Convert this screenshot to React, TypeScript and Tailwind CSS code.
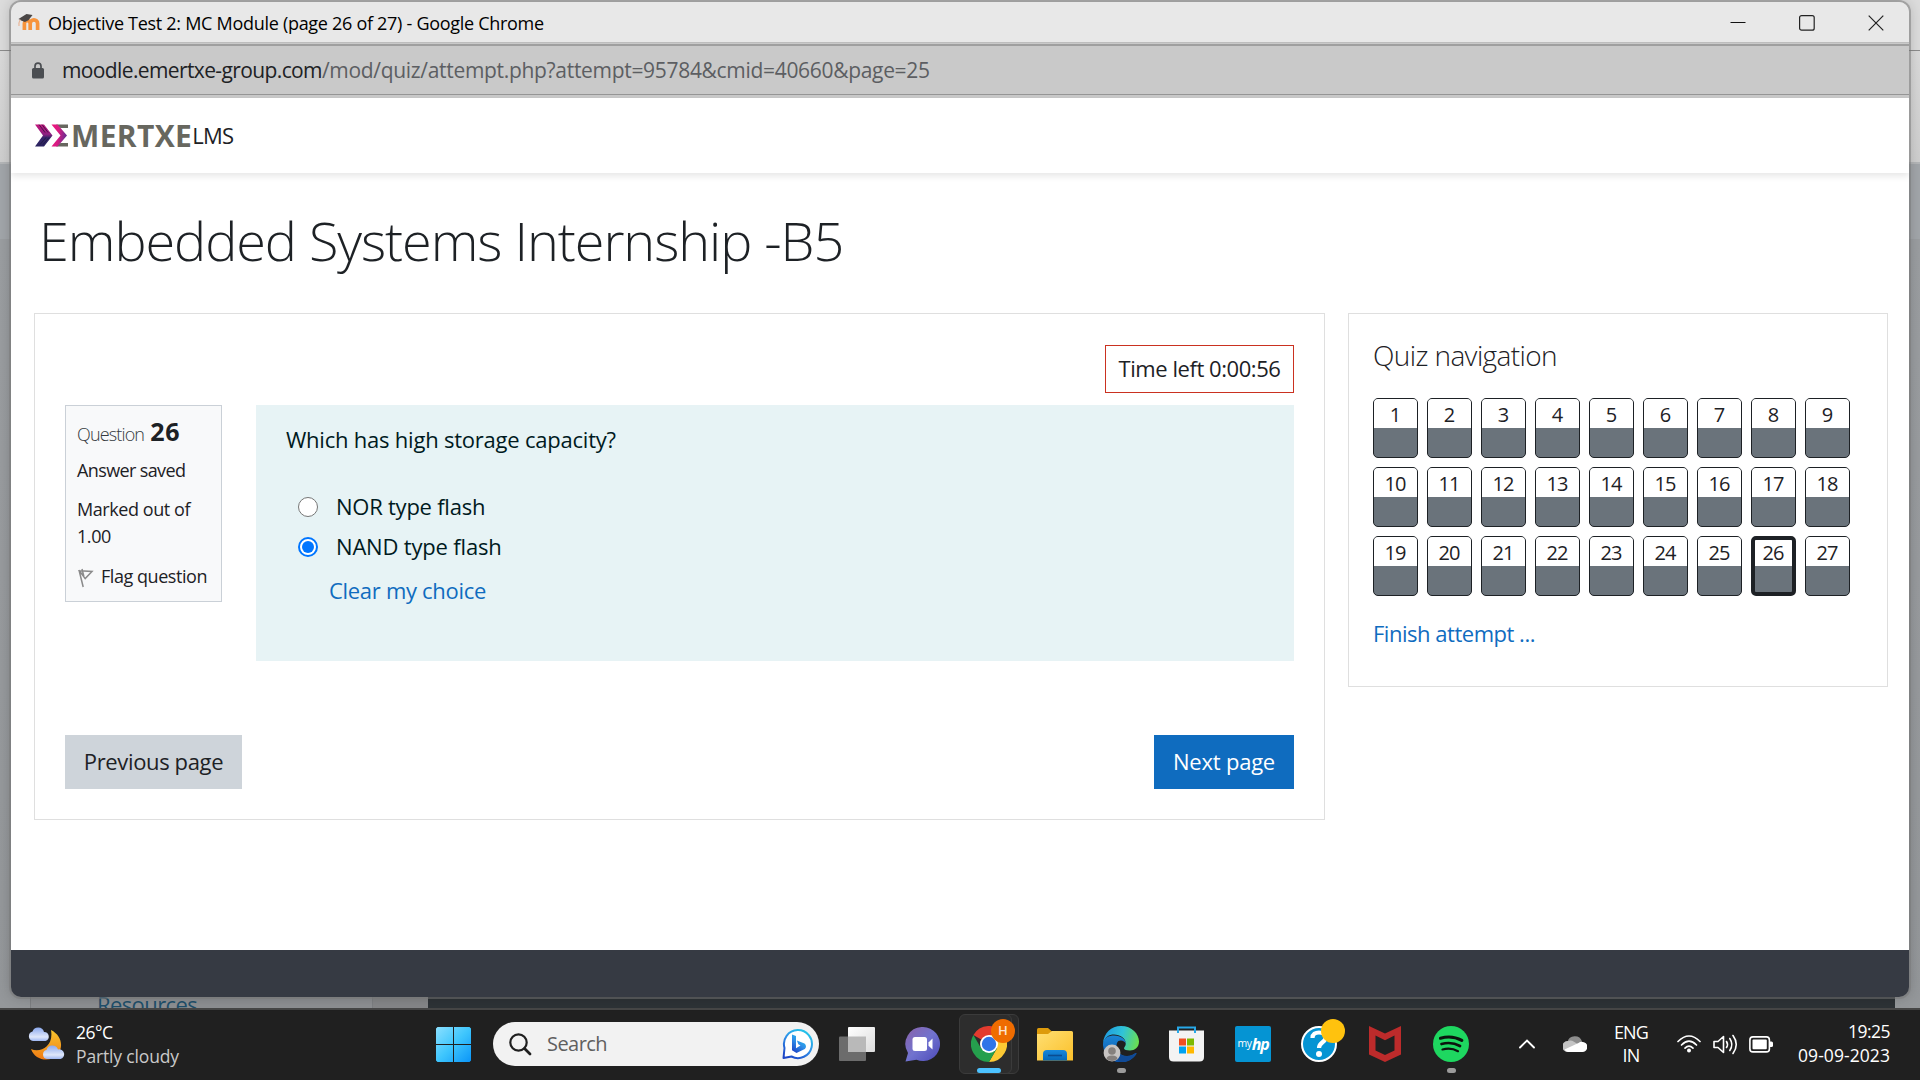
import React from "react";

const questions = Array.from({ length: 27 }, (_, i) => i + 1);
const CURRENT = 26;

function MoodleIcon() {
  return (
    <svg width="24" height="20" viewBox="0 0 24 20" className="mt-[1px]">
      <path d="M7.2 17V10.5a2.9 2.9 0 0 1 5.8 0V17M13 17V10.5a2.9 2.9 0 0 1 7.4 0V17" transform="translate(.2 0)" fill="none" stroke="#f7943c" strokeWidth="3.7" />
      <path d="M1.500 6 9.500 1 15.500 2l-4 5.300-3.600 1.600L4.200 7.600z" fill="#4a4646" />
      <path d="M3.200 6.500Q1.600 9.500 2 13" stroke="#e9b79a" strokeWidth="1.2" fill="none" />
    </svg>
  );
}

function LockIcon() {
  return (
    <svg width="14" height="17" viewBox="0 0 14 17">
      <rect x="1" y="6" width="12" height="10.5" rx="1.5" fill="#4b4e52" />
      <path d="M4 7V4.200a3 3 0 0 1 6 0V7" fill="none" stroke="#4b4e52" strokeWidth="1.7" />
    </svg>
  );
}

function Logo() {
  return (
    <div className="flex h-[24px] items-center">
      <svg width="35" height="23" viewBox="0 0 35 23">
        <defs>
          <linearGradient id="chev" x1="0" y1="0" x2="0" y2="1">
            <stop offset="0" stopColor="#c4157c" />
            <stop offset=".45" stopColor="#8c2180" />
            <stop offset=".6" stopColor="#35276b" />
            <stop offset="1" stopColor="#2a235f" />
          </linearGradient>
          <linearGradient id="chev2" x1="0" y1="0" x2="1" y2=".2">
            <stop offset="0" stopColor="#f0147c" />
            <stop offset=".5" stopColor="#d81c82" />
            <stop offset="1" stopColor="#6b2d91" />
          </linearGradient>
        </defs>
        <path d="M0 .5H9L17.500 11.500 9 22.500H0L8 11.500z" fill="url(#chev)" />
        <path d="M4 .5l6 8M7 .5l6 8M5 20.500l6-7M8 20.500l6-7" stroke="#1d1538" strokeWidth=".7" />
        <path d="M21 .5H33V4H25.500zM21 22.500H33V19H25.500z" fill="#67675f" />
        <path d="M16.500 .5h6L32 11.500 22.500 22.500h-6L25.500 11.500z" fill="url(#chev2)" />
      </svg>
      <span className="ml-[1px] text-[30px] leading-[22px] font-bold tracking-[0.350px] text-[#67675f]">MERTXE</span>
      <span className="pb-[1px] text-[22px] leading-[24px] tracking-[-0.700px] text-[#1d2125]">LMS</span>
    </div>
  );
}

function TitleBar() {
  return (
    <div className="flex h-[41px] shrink-0 items-center border-b border-[#bdbdbd] bg-[#e8e8e8] pl-[6px]">
      <MoodleIcon />
      <span className="ml-[7px] pt-[2px] text-[18px] tracking-[-0.29px] text-black">
        Objective Test 2: MC Module (page 26 of 27) - Google Chrome
      </span>
      <div className="mr-[25px] ml-auto flex items-center gap-[53px] pt-[1px]">
        <svg width="16" height="16" viewBox="0 0 16 16"><path d="M.5 7.500h15" stroke="#111" /></svg>
        <svg width="16" height="16" viewBox="0 0 16 16"><rect x=".6" y=".6" width="14.600" height="14.600" rx="2" fill="none" stroke="#222" strokeWidth="1.2" /></svg>
        <svg width="16" height="16" viewBox="0 0 16 16"><path d="M.7.7l14.600 14.600M15.300.7.7 15.300" stroke="#222" strokeWidth="1.2" /></svg>
      </div>
    </div>
  );
}

function UrlBar() {
  return (
    <div className="flex h-[55px] shrink-0 flex-col bg-[#c9c9c9] pt-[1px]">
      <div className="flex h-[51px] items-center border-t-2 border-b border-t-[#9f9f9f] border-b-[#959595] pl-[20px]">
        <LockIcon />
        <span className="ml-[17px] text-[21px] leading-[28px] tracking-[-0.620px] text-[#202124]">moodle.emertxe-group.com</span>
        <span className="text-[21px] leading-[28px] tracking-[-0.310px] text-[#5c5e62]">
          /mod/quiz/attempt.php?attempt=95784&amp;cmid=40660&amp;page=25
        </span>
      </div>
    </div>
  );
}

function Radio({ checked }: { checked?: boolean }) {
  return checked ? (
    <span className="mt-[1px] flex size-[20px] items-center justify-center rounded-full border-2 border-[#0075ff] bg-white">
      <span className="size-[12px] rounded-full bg-[#0075ff]" />
    </span>
  ) : (
    <span className="mt-[1px] size-[20px] rounded-full border-[1.500px] border-[#767676] bg-white" />
  );
}

function QuestionInfo() {
  return (
    <div className="flex h-[197px] w-[157px] flex-col border border-[#cad0d7] bg-[#f8f9fa] pl-[11px] text-[18px] whitespace-nowrap text-[#1d2125]">
      <div className="mt-[11px] flex h-[28px] items-baseline leading-[28px]">
        <span className="text-[18px] font-light tracking-[-0.850px] text-[#343a40]">Question</span>
        <span className="ml-[6px] text-[25px] font-bold tracking-[0.800px]">26</span>
      </div>
      <div className="mt-[12px] leading-[27px] tracking-[-0.620px]">Answer saved</div>
      <div className="mt-[12px] leading-[27px] tracking-[-0.430px]">
        Marked out of
        <br />
        1.00
      </div>
      <div className="mt-[13px] flex items-center leading-[27px] tracking-[-0.450px]">
        <svg width="17" height="20" viewBox="0 0 17 20" className="mt-[2px] mr-[7px]">
          <path d="M2 2l4.200 17M2.400 2.800 15 3.400 8.200 10.600zM5 1l2 8" fill="none" stroke="#8a8a8a" strokeWidth="1.5" />
        </svg>
        Flag question
      </div>
    </div>
  );
}

function QuestionBody() {
  return (
    <div className="h-[256px] w-[1038px] bg-[#e7f3f5] pt-[17px] pl-[30px] text-[22px] leading-[34px] text-[#001a1e]">
      <div className="tracking-[-0.220px]">Which has high storage capacity?</div>
      <div className="mt-[33px] flex h-[34px] items-center pl-[12px]">
        <Radio />
        <span className="ml-[18px] tracking-[-0.240px]">NOR type flash</span>
      </div>
      <div className="mt-[6px] flex h-[34px] items-center pl-[12px]">
        <Radio checked />
        <span className="ml-[18px] tracking-[-0.180px]">NAND type flash</span>
      </div>
      <div className="mt-[10px] pl-[43px] tracking-[-0.300px] text-[#0f6cbf]">Clear my choice</div>
    </div>
  );
}

function NavButton({ n }: { n: number }) {
  const current = n === CURRENT;
  return (
    <div
      className={
        current
          ? "flex h-[60px] flex-col overflow-hidden rounded-[5px] border-4 border-[#1d2125] bg-[#6a737b]"
          : "flex h-[60px] flex-col overflow-hidden rounded-[5px] border border-[#1d2125] bg-[#6a737b]"
      }
    >
      <div
        className={
          current
            ? "flex h-[26px] items-center justify-center bg-white pr-[1px] pb-[1px] text-[20px] leading-none tracking-[-0.900px]"
            : "flex h-[29px] items-center justify-center bg-white pt-[2px] pr-[1px] text-[20px] leading-none tracking-[-0.900px]"
        }
      >
        {n}
      </div>
    </div>
  );
}

function QuizPage() {
  return (
    <>
      <header className="relative flex h-[75px] shrink-0 items-center bg-white pl-[24px] shadow-[0_3px_7px_rgba(0,0,0,0.1)]">
        <Logo />
      </header>
      <main className="flex flex-1 flex-col bg-white text-[#1d2125]">
        <h1 className="mt-[33px] ml-[28px] h-[68px] text-[54px] leading-[68px] font-light tracking-[-1.060px]">
          Embedded Systems Internship -B5
        </h1>
        <div className="mt-[39px] flex items-start gap-[23px] pl-[23px]">
          <section className="flex h-[507px] w-[1291px] flex-col border border-[#dfdfdf] px-[30px]">
            <div className="mt-[31px] flex h-[48px] w-[189px] items-center justify-center self-end border border-[#ca3120] pb-[2px] text-[22px] tracking-[-0.440px]">
              Time left 0:00:56
            </div>
            <div className="mt-[12px] flex items-start justify-between">
              <QuestionInfo />
              <QuestionBody />
            </div>
            <div className="mt-[74px] flex justify-between text-[22px]">
              <button className="h-[54px] w-[177px] bg-[#ced4da] pb-[2px] tracking-[-0.360px]">Previous page</button>
              <button className="h-[54px] w-[140px] bg-[#0f6cbf] pb-[2px] tracking-[-0.220px] text-white">Next page</button>
            </div>
          </section>
          <aside className="flex h-[374px] w-[540px] flex-col border border-[#dfdfdf] pl-[24px]">
            <h2 className="mt-[24px] text-[28px] leading-[34px] font-light tracking-[-0.600px]">Quiz navigation</h2>
            <div className="mt-[26px] grid grid-cols-[repeat(9,45px)] gap-[9px]">
              {questions.map((n) => (
                <NavButton key={n} n={n} />
              ))}
            </div>
            <a className="mt-[20px] text-[22px] leading-[34px] tracking-[-0.480px] text-[#0f6cbf]">Finish attempt ...</a>
          </aside>
        </div>
      </main>
      <footer className="h-[47px] shrink-0 bg-[#363a43]" />
    </>
  );
}

function WeatherIcon() {
  return (
    <svg width="37" height="34" viewBox="0 0 37 34">
      <defs>
        <linearGradient id="moon" x1="0" y1="0" x2="0" y2="1">
          <stop offset="0" stopColor="#f7c52d" />
          <stop offset="1" stopColor="#f07a13" />
        </linearGradient>
        <linearGradient id="cloud" x1="0" y1="0" x2="0" y2="1">
          <stop offset="0" stopColor="#8ba9ee" />
          <stop offset=".7" stopColor="#dfe7fa" />
          <stop offset="1" stopColor="#9db6f2" />
        </linearGradient>
      </defs>
      <path d="M23 3C33 8 36 19 30 27 23 36 7 34 3 22 12 26 26 20 23 3z" fill="url(#moon)" />
      <path d="M5 14a4.800 4.800 0 0 1-.5-9.400A6 6 0 0 1 16 5a4.600 4.600 0 0 1 1.500 9z" fill="url(#cloud)" />
      <path d="M19 32a4.600 4.600 0 0 1-.5-9A6 6 0 0 1 30 22.500a4.800 4.800 0 0 1 2.500 9.500z" fill="url(#cloud)" />
    </svg>
  );
}

function StartIcon() {
  return (
    <svg width="35" height="35" viewBox="0 0 35 35">
      <defs>
        <linearGradient id="win" x1="0" y1="0" x2="1" y2="1">
          <stop offset="0" stopColor="#8be0ff" />
          <stop offset=".5" stopColor="#3fc6fd" />
          <stop offset="1" stopColor="#0a95f8" />
        </linearGradient>
      </defs>
      <path d="M1.500 0H17V17H0V1.500zM18 0H33.500L35 1.500V17H18zM0 18H17V35H1.500L0 33.500zM18 18H35V33.500L33.500 35H18z" fill="url(#win)" />
    </svg>
  );
}

function BingIcon() {
  return (
    <svg width="31" height="32" viewBox="0 0 31 32">
      <defs>
        <linearGradient id="bing" x1=".8" y1="0" x2=".2" y2="1">
          <stop offset="0" stopColor="#23c8ea" />
          <stop offset=".5" stopColor="#2f8fe8" />
          <stop offset="1" stopColor="#1c45c6" />
        </linearGradient>
      </defs>
      <path d="M1.500 30 2.500 20A14 14 0 1 1 9.500 28.500z" fill="#fff" stroke="url(#bing)" strokeWidth="2" strokeLinejoin="round" />
      <path d="M10 6.500l4 1.600v12.200l4.500-2.800-2.200-1.200-1.400-3.900 7.600 3a3.600 3.600 0 0 1 .3 5.600L14.500 25 10 22.300z" fill="url(#bing)" />
    </svg>
  );
}

function TaskViewIcon() {
  return (
    <svg width="36" height="34" viewBox="0 0 36 34">
      <defs>
        <linearGradient id="tv" x1="0" y1="0" x2="1" y2="1">
          <stop offset="0" stopColor="#fff" />
          <stop offset="1" stopColor="#dcdcdc" />
        </linearGradient>
      </defs>
      <rect x="0" y="9.500" width="27" height="24.500" rx="1" fill="#6c6c6c" />
      <rect x="9" y="0" width="27" height="25" rx="1" fill="url(#tv)" />
      <rect x="9" y="9.500" width="18" height="15.500" fill="#b9b9b9" />
    </svg>
  );
}

function ChatIcon() {
  return (
    <svg width="35" height="35" viewBox="0 0 35 35" className="mr-[2px]">
      <defs>
        <linearGradient id="chat" x1="0" y1="0" x2="1" y2="1">
          <stop offset="0" stopColor="#8a62a8" />
          <stop offset=".5" stopColor="#7173cf" />
          <stop offset="1" stopColor="#4b48b8" />
        </linearGradient>
      </defs>
      <path d="M18 0a17 17 0 1 1-6.500 32.700L.5 34.500 3 26A17 17 0 0 1 18 0z" fill="url(#chat)" />
      <rect x="7.500" y="10" width="14.500" height="14" rx="2.500" fill="#fff" />
      <path d="M23.500 15.500 27.500 11.500v11L23.500 18.800z" fill="#fff" />
    </svg>
  );
}

function ChromeIcon() {
  return (
    <svg width="36" height="36" viewBox="0 0 48 48">
      <path d="M24 24 3.200 12A24 24 0 0 1 44.800 12z" fill="#e33b2e" />
      <path d="M24 12H44.800A24 24 0 0 1 24 48L34.400 30z" fill="#fcc934" />
      <path d="M13.600 30 3.200 12A24 24 0 0 0 24 48L34.400 30 24 34z" fill="#259f4d" />
      <circle cx="24" cy="24" r="12" fill="#fff" />
      <circle cx="24" cy="24" r="9.600" fill="#2f74e8" />
    </svg>
  );
}

function ExplorerIcon() {
  return (
    <svg width="36" height="33" viewBox="0 0 36 33">
      <defs>
        <linearGradient id="fold" x1="0" y1="0" x2="1" y2="1">
          <stop offset="0" stopColor="#ffdf73" />
          <stop offset="1" stopColor="#fbc02a" />
        </linearGradient>
        <linearGradient id="foldb" x1="0" y1="0" x2="0" y2="1">
          <stop offset="0" stopColor="#1687dc" />
          <stop offset="1" stopColor="#0668b8" />
        </linearGradient>
      </defs>
      <path d="M0 1.500Q0 0 1.500 0H11L15.500 4V8H0z" fill="#dd9b0c" />
      <path d="M0 6H11L15 3H34.500Q36 3 36 4.500V32.500H0z" fill="url(#fold)" />
      <path d="M6 32.500V26Q6 22 10 22H26Q30 22 30 26V32.500z" fill="url(#foldb)" />
      <path d="M11 27.500H25" stroke="#0a4c91" strokeWidth="1.600" />
    </svg>
  );
}

function EdgeIcon() {
  return (
    <svg width="36" height="36" viewBox="0 0 36 36">
      <defs>
        <linearGradient id="edgeTop" x1="0" y1=".4" x2="1" y2=".6">
          <stop offset="0" stopColor="#1e9be0" />
          <stop offset=".5" stopColor="#30c3d8" />
          <stop offset="1" stopColor="#6be04f" />
        </linearGradient>
        <linearGradient id="edgeLow" x1="0" y1="0" x2="0" y2="1">
          <stop offset="0" stopColor="#1a86d6" />
          <stop offset="1" stopColor="#0c4fa3" />
        </linearGradient>
      </defs>
      <path d="M0 18C0 12 6 9.500 11 9.500c7 0 12 4 12 8.500-1-4-8-5-9-1-2 6 2 13 10 13 4 0 7-2 8.500-3 .7-.4 1.200.3.800 1A18 18 0 0 1 0 18z" fill="url(#edgeLow)" />
      <path d="M24 30c4 0 7-2 8.500-3 .7-.4 1.200.3.800 1A18 18 0 0 1 17 36c-4-3-6-8-4.500-14C14 27 18 30 24 30z" fill="#104a96" />
      <path d="M0 17C1 7 8 0 18 0c11 0 18 8 18 15.500 0 6-4.500 9-9 9-3.500 0-6-1-6-2.300 0-1 1.800-1.700 1.800-4.700C22.800 12 17 8.500 11 8.500 6 8.500 2 11 0 17z" fill="url(#edgeTop)" />
      <circle cx="9" cy="27" r="8.400" fill="#c7c4c2" />
      <circle cx="9" cy="25" r="3.800" fill="#85807d" />
      <path d="M3.500 33Q3.500 29.500 9 29.500T14.500 33Q12 35 9 35T3.500 33z" fill="#85807d" />
    </svg>
  );
}

function StoreIcon() {
  return (
    <svg width="35" height="36" viewBox="0 0 35 36" className="mr-[2px]">
      <path d="M0 4.500H35V31Q35 35.500 30.500 35.500H4.500Q0 35.500 0 31z" fill="#f3f3f3" />
      <path d="M9 7V1.500H26V7" fill="none" stroke="#27a8e8" strokeWidth="2" />
      <path d="M10 12.500h7v7h-7z" fill="#f04e23" />
      <path d="M18 12.500h7v7h-7z" fill="#7eb900" />
      <path d="M10 20.500h7v7h-7z" fill="#00a2f0" />
      <path d="M18 20.500h7v7h-7z" fill="#ffb800" />
    </svg>
  );
}

function MyHpIcon() {
  return (
    <div className="flex size-[36px] items-center justify-center rounded-[2px] bg-[#0594d3] pb-[1px] text-white">
      <span className="text-[10.500px] leading-none tracking-[-0.300px]">my</span>
      <span className="text-[16px] leading-none font-bold tracking-[-1.200px] italic">hp</span>
    </div>
  );
}

function HelpIcon() {
  return (
    <div className="relative flex size-[36px] items-center justify-center rounded-full border-2 border-white bg-[#0594d3]">
      <svg width="20" height="28" viewBox="0 0 20 28">
        <path d="M3.500 8C3.500 4 6.500 2.500 10 2.500s6.500 2 6.500 5.200C16.500 12.500 10 12 10 18" fill="none" stroke="#fff" strokeWidth="4.200" />
        <circle cx="10" cy="24" r="3" fill="#fff" />
      </svg>
      <span className="absolute top-[-9px] left-[18px] size-[24px] rounded-full bg-[#ffc20e]" />
    </div>
  );
}

function McAfeeIcon() {
  return (
    <svg width="32" height="36" viewBox="0 0 32 36">
      <path d="M0 0 16 7.500 32 0V28.500L16 36 0 28.500z" fill="#bd2b2b" />
      <path d="M6.500 9.500 16 14.200 25.500 9.500V24.500L16 29 6.500 24.500z" fill="#202020" />
    </svg>
  );
}

function SpotifyIcon() {
  return (
    <svg width="36" height="36" viewBox="0 0 36 36">
      <circle cx="18" cy="18" r="18" fill="#1ed760" />
      <g fill="none" stroke="#0c130e" strokeLinecap="round">
        <path d="M7.500 12.200Q19 9 28.800 14.300" strokeWidth="3.200" />
        <path d="M8.500 18Q18.500 15.300 27 20" strokeWidth="2.700" />
        <path d="M9.500 23.500Q18 21.300 25 25.200" strokeWidth="2.200" />
      </g>
    </svg>
  );
}

function Cell({ children, dot }: { children: React.ReactNode; dot?: boolean }) {
  return (
    <div className="relative flex h-full w-[66px] shrink-0 items-center justify-center pb-[2px]">
      {children}
      {dot && <span className="absolute bottom-[7px] left-[29px] h-[5px] w-[9px] rounded-full bg-[#9b9b9b]" />}
    </div>
  );
}

function Taskbar() {
  return (
    <div className="flex h-[72px] w-[1920px] shrink-0 items-center border-t-2 border-[#464646] bg-[#202020] text-white">
      <div className="flex w-[436px] items-center pb-[3px] pl-[28px]">
        <WeatherIcon />
        <div className="ml-[11px] text-[17.500px] leading-[24px]">
          <div className="tracking-[-0.500px]">26°C</div>
          <div className="tracking-[-0.150px] text-[#c9c9c9]">Partly cloudy</div>
        </div>
      </div>
      <span className="pb-[1px]">
        <StartIcon />
      </span>
      <div className="mb-[2px] ml-[22px] flex h-[44px] w-[326px] items-center rounded-full bg-[#f2f2f2] pr-[6px] pl-[16px]">
        <svg width="23" height="23" viewBox="0 0 23 23">
          <circle cx="9.500" cy="9.500" r="8.200" fill="none" stroke="#1f1f1f" strokeWidth="2.200" />
          <path d="M15.500 15.500l5.500 5.500" stroke="#1f1f1f" strokeWidth="2.800" strokeLinecap="round" />
        </svg>
        <span className="ml-[15px] text-[20px] tracking-[-0.550px] text-[#5f5f5f]">Search</span>
        <span className="ml-auto">
          <BingIcon />
        </span>
      </div>
      <div className="ml-[5px] flex h-full items-center">
        <Cell><TaskViewIcon /></Cell>
        <Cell><ChatIcon /></Cell>
        <Cell>
          <span className="absolute top-[4px] left-[10px] h-[60px] w-[53px] rounded-[6px] border border-[#3b3b3b] bg-[#2a2a2a]" />
          <span className="absolute top-[4px] left-[3px] h-[60px] w-[53px] rounded-[6px] border border-[#3b3b3b] bg-[#2d2d2d]" />
          <span className="relative"><ChromeIcon /></span>
          <span className="absolute top-[9px] left-[35px] flex size-[24px] items-center justify-center rounded-full bg-[#ef6c00] text-[13px] font-semibold text-[#fbe3d0]">H</span>
          <span className="absolute bottom-[7px] left-[21px] h-[5px] w-[24px] rounded-full bg-[#4cc2ff]" />
        </Cell>
        <Cell><ExplorerIcon /></Cell>
        <Cell dot><EdgeIcon /></Cell>
        <Cell><StoreIcon /></Cell>
        <Cell><MyHpIcon /></Cell>
        <Cell><HelpIcon /></Cell>
        <Cell><McAfeeIcon /></Cell>
        <Cell dot><SpotifyIcon /></Cell>
      </div>
      <svg className="mb-[2px] ml-[35px]" width="16" height="10" viewBox="0 0 16 10">
        <path d="M1 8.500 8 1.500l7 7" fill="none" stroke="#fff" strokeWidth="1.900" strokeLinecap="round" />
      </svg>
      <svg className="mb-[1px] ml-[28px]" width="24" height="17" viewBox="0 0 24 17">
        <path d="M4.500 6A7.500 7.500 0 0 1 19 5.500L14 10z" fill="#8d8d8d" />
        <path d="M4.500 16A5.400 5.400 0 0 1 5 5Q8 3.800 11 5.800L21 12z" fill="#c4c4c4" />
        <path d="M1.500 13.500 15.500 7Q18 5 21 6.300A5 5 0 0 1 19.500 16H5Q2.500 15.800 1.500 13.500z" fill="#fff" />
      </svg>
      <div className="mb-[2px] ml-[26px] w-[36px] text-center text-[18px] leading-[23px] tracking-[-0.880px]">
        <div>ENG</div>
        <div>IN</div>
      </div>
      <svg className="mb-[2px] ml-[28px]" width="24" height="18" viewBox="0 0 24 18">
        <g fill="none" stroke="#fff" strokeWidth="1.700" strokeLinecap="round">
          <path d="M1 6.500Q12-4.500 23 6.500" />
          <path d="M4.500 10Q12 2.500 19.500 10" />
          <path d="M8 13.200Q12 9.200 16 13.200" />
        </g>
        <circle cx="12" cy="15.500" r="2" fill="#fff" />
      </svg>
      <svg className="mb-[2px] ml-[12px]" width="25" height="21" viewBox="0 0 25 21">
        <g fill="none" stroke="#fff" strokeWidth="1.600" strokeLinecap="round" strokeLinejoin="round">
          <path d="M1 7.500H5L10.500 2.500V18.500L5 13.500H1z" />
          <path d="M13.500 7.500Q15.500 10.500 13.500 13.500" />
          <path d="M16.800 4.500Q20.800 10.500 16.800 16.500" />
          <path d="M20 1.500Q26.500 10.500 20 19.500" />
        </g>
      </svg>
      <svg className="mb-[2px] ml-[11px]" width="25" height="17" viewBox="0 0 25 17">
        <rect x=".9" y=".9" width="19.500" height="15" rx="3" fill="none" stroke="#fff" strokeWidth="1.600" />
        <rect x="3.500" y="3.500" width="14.300" height="9.800" rx="1" fill="#fff" />
        <path d="M21 5.500h1.500a1.500 1.500 0 0 1 1.500 1.500v2.500a1.500 1.500 0 0 1-1.500 1.500H21z" fill="#fff" />
      </svg>
      <div className="mr-[30px] mb-[4px] ml-auto text-right text-[17.500px] leading-[24px]">
        <div className="tracking-[-0.500px]">19:25</div>
        <div className="tracking-[0.070px]">09-09-2023</div>
      </div>
    </div>
  );
}

function BackgroundPage() {
  return (
    <div className="flex h-[1008px] flex-col">
      <div className="h-[50px] bg-[#dcdcdc]" />
      <div className="h-px bg-[#8c8c8c]" />
      <div className="h-[111px] bg-linear-to-b from-[#dadada] to-[#cfcfcf]" />
      <div className="h-[77px] border-t-2 border-[#b4b6b8] bg-[#a2a6aa]" />
      <div className="flex flex-1 items-end bg-linear-to-b from-[#9b9ea1] to-[#94979a]">
        <div className="ml-[30px] flex h-[60px] w-[343px] items-end border-x border-[#7d7f82] bg-[#8d8f92] pl-[66px]">
          <div className="h-[16px] overflow-hidden text-[22px] leading-[24px] tracking-[-0.600px] text-[#1f4f6b]">Resources</div>
        </div>
        <div className="h-[60px] w-[55px] bg-[#858688]" />
        <div className="h-[60px] w-[1467px] bg-[#2d3236]" />
      </div>
    </div>
  );
}

export default function App() {
  return (
    <div className="relative flex h-[1080px] w-[1920px] flex-col overflow-hidden bg-[#94979a] font-['Open_Sans','Noto_Sans',sans-serif]">
      <BackgroundPage />
      <Taskbar />
      <div className="absolute top-[2px] left-[11px] flex h-[995px] w-[1898px] flex-col overflow-hidden rounded-[10px] shadow-[0_0_0_2px_rgba(120,120,120,0.5),0_0_14px_rgba(0,0,0,0.22)]">
        <TitleBar />
        <UrlBar />
        <QuizPage />
      </div>
    </div>
  );
}
